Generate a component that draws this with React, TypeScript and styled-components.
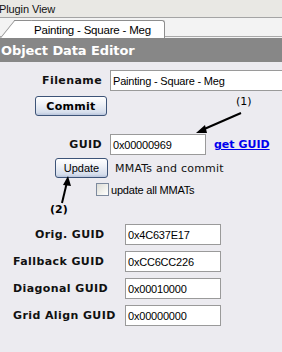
import React from "react";
import styled, { createGlobalStyle } from "styled-components";

const Global = createGlobalStyle`
  html, body { margin: 0; padding: 0; }
  body {
    width: 282px;
    height: 352px;
    overflow: hidden;
    background: #ecebf0;
    font-family: "Liberation Sans", Arial, sans-serif;
  }
`;

const Page = styled.div`
  width: 282px;
  height: 352px;
  display: flex;
  flex-direction: column;
  background: #ecebf0;
`;

const TopBar = styled.div`
  height: 17px;
  background: #e9e8e4;
  border-bottom: 1px solid #a4a4a4;
  display: flex;
  align-items: center;
  font-size: 11px;
  color: #111;
  letter-spacing: -0.1px;
  span { margin-left: -1px; }
`;

const TabStrip = styled.div`
  height: 20px;
  background: #f3f3f3;
  display: flex;
  align-items: flex-end;
  position: relative;
  &::after {
    content: "";
    position: absolute;
    left: 0;
    right: 0;
    bottom: 1px;
    height: 1px;
    background: #a9a9a9;
  }
`;

const Tab = styled.div`
  position: relative;
  z-index: 1;
  margin-left: 15px;
  width: 150px;
  height: 18px;
  background: #fff;
  border-top: 1px solid #8e8e8e;
  border-right: 1px solid #8e8e8e;
  border-top-right-radius: 3px;
  display: flex;
  align-items: center;
  justify-content: center;
  font-size: 11.5px;
  letter-spacing: -0.2px;
  color: #000;
  padding-left: 6px;
  box-sizing: border-box;
  &::before {
    content: "";
    position: absolute;
    left: -15px;
    top: -1px;
    bottom: 0;
    width: 16px;
    background: #fff;
    border-top: 1px solid #8e8e8e;
    border-left: 1px solid #8e8e8e;
    transform: skewX(-39deg);
    transform-origin: bottom left;
  }
`;

const Header = styled.div`
  height: 24px;
  background: #878787;
  color: #fff;
  display: flex;
  align-items: center;
  padding-left: 1px;
  font-family: "DejaVu Sans", Verdana, sans-serif;
  font-weight: bold;
  font-size: 13px;
  letter-spacing: -0.1px;
`;

const Content = styled.div`
  position: relative;
  flex: 1;
  display: flex;
  flex-direction: column;
`;

const Row = styled.div<{ $top: number; $left?: number }>`
  display: flex;
  align-items: center;
  margin-top: ${(p) => p.$top}px;
  padding-left: ${(p) => p.$left ?? 0}px;
`;

const Label = styled.div<{ $width: number }>`
  width: ${(p) => p.$width}px;
  text-align: right;
  font-family: "DejaVu Sans", Verdana, sans-serif;
  font-weight: bold;
  font-size: 11px;
  letter-spacing: 0.4px;
  color: #111;
  margin-right: 8px;
  flex-shrink: 0;
`;

const Input = styled.div<{ $width: number }>`
  width: ${(p) => p.$width}px;
  height: 21px;
  box-sizing: border-box;
  background: #fff;
  border: 1px solid #9a9a9a;
  display: flex;
  align-items: center;
  padding-left: 2px;
  font-size: 11px;
  letter-spacing: -0.2px;
  color: #000;
  flex-shrink: 0;
  white-space: nowrap;
  overflow: hidden;
`;

const Button = styled.div<{ $width: number; $bold?: boolean }>`
  width: ${(p) => p.$width}px;
  height: 20px;
  box-sizing: border-box;
  border: 1px solid #3d5478;
  border-radius: 3px;
  background: linear-gradient(#ffffff 0%, #f1f3f8 35%, #d6deec 85%, #b9c5dc 100%);
  display: flex;
  align-items: center;
  justify-content: center;
  font-family: ${(p) =>
    p.$bold ? `"DejaVu Sans", Verdana, sans-serif` : `"Liberation Sans", Arial, sans-serif`};
  font-weight: ${(p) => (p.$bold ? "bold" : "normal")};
  font-size: 11px;
  letter-spacing: ${(p) => (p.$bold ? "0.3px" : "0")};
  color: #000;
  flex-shrink: 0;
`;

const Link = styled.span`
  margin-left: 8px;
  font-family: "DejaVu Sans", Verdana, sans-serif;
  font-weight: bold;
  font-size: 11px;
  color: #0000ee;
  text-decoration: underline;
`;

const Wide = styled.span`
  margin-left: 7px;
  font-family: "DejaVu Sans", Verdana, sans-serif;
  font-size: 11px;
  letter-spacing: 0.2px;
  color: #111;
`;

const Check = styled.div`
  width: 13px;
  height: 13px;
  box-sizing: border-box;
  border: 1px solid #7d8a9e;
  background: linear-gradient(135deg, #dcdcd6 0%, #f2f2ee 60%, #ffffff 100%);
  flex-shrink: 0;
`;

const CheckText = styled.span`
  margin-left: 2px;
  font-size: 11px;
  letter-spacing: -0.2px;
  color: #000;
`;

const GuidList = styled.div`
  display: flex;
  flex-direction: column;
  gap: 6px;
  margin-top: 28px;
`;

const ListRow = styled.div`
  display: grid;
  grid-template-columns: 112px 96px;
  align-items: center;
  padding-left: 13px;
`;

const ListLabel = styled.div<{ $indent?: number }>`
  padding-left: ${(p) => p.$indent ?? 0}px;
  font-family: "DejaVu Sans", Verdana, sans-serif;
  font-weight: bold;
  font-size: 11px;
  letter-spacing: 0.4px;
  color: #111;
  white-space: nowrap;
`;

const Note = styled.span<{ $x: number; $y: number; $bold?: boolean }>`
  position: absolute;
  left: ${(p) => p.$x}px;
  top: ${(p) => p.$y}px;
  font-family: "DejaVu Sans", Verdana, sans-serif;
  font-size: 11px;
  font-weight: ${(p) => (p.$bold ? "bold" : "normal")};
  color: #000;
  line-height: 12px;
`;

const Arrows = styled.svg`
  position: absolute;
  left: 0;
  top: 0;
  pointer-events: none;
`;

const list = [
  { label: "Orig. GUID", value: "0x4C637E17", indent: 22 },
  { label: "Fallback GUID", value: "0xCC6CC226" },
  { label: "Diagonal GUID", value: "0x00010000" },
  { label: "Grid Align GUID", value: "0x00000000" },
];

// content starts at y = 63
export default function App() {
  return (
    <>
      <Global />
      <Page>
        <TopBar>
          <span>Plugin View</span>
        </TopBar>
        <TabStrip>
          <Tab>Painting - Square - Meg</Tab>
        </TabStrip>
        <Header>Object Data Editor</Header>
        <Content>
          <Row $top={8}>
            <Label $width={102}>Filename</Label>
            <Input $width={180}>Painting - Square - Meg</Input>
          </Row>
          <Row $top={5} $left={35}>
            <Button $width={72} $bold>
              Commit
            </Button>
          </Row>
          <Row $top={18}>
            <Label $width={102}>GUID</Label>
            <Input $width={96}>0x00000969</Input>
            <Link>get GUID</Link>
          </Row>
          <Row $top={3} $left={55}>
            <Button $width={53}>Update</Button>
            <Wide>MMATs and commit</Wide>
          </Row>
          <Row $top={5} $left={96}>
            <Check />
            <CheckText>update all MMATs</CheckText>
          </Row>
          <GuidList>
            {list.map((r) => (
              <ListRow key={r.label}>
                <ListLabel $indent={r.indent}>{r.label}</ListLabel>
                <Input $width={96}>{r.value}</Input>
              </ListRow>
            ))}
          </GuidList>
          <Note $x={236} $y={34}>(1)</Note>
          <Note $x={50} $y={142} $bold>
            (2)
          </Note>
          <Arrows width="282" height="289" viewBox="0 0 282 289">
            <g stroke="#000" strokeWidth="2" fill="#000">
              <line x1="241" y1="51" x2="202" y2="68" />
              <polygon points="196,71 205,63 207,71" stroke="none" />
              <line x1="62" y1="141" x2="67" y2="120" />
              <polygon points="68,114 63,123 71,124" stroke="none" />
            </g>
          </Arrows>
        </Content>
      </Page>
    </>
  );
}
